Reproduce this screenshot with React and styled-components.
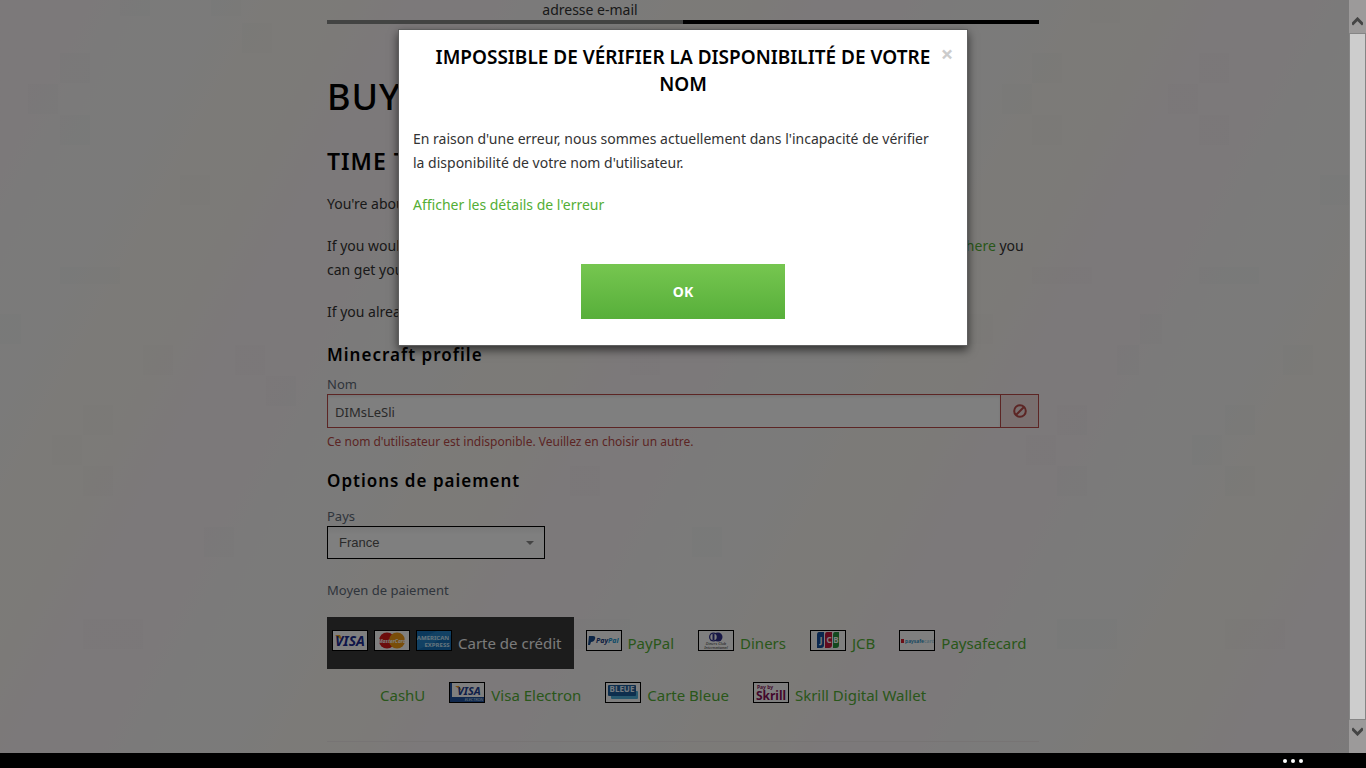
import React from "react";
import styled, { createGlobalStyle, css } from "styled-components";

const GlobalStyle = createGlobalStyle`
  * { box-sizing: border-box; }
  html, body, #root { height: 100%; }
  body {
    margin: 0;
    overflow: hidden;
    background: #000;
    color: #333;
    font-family: "Noto Sans", "Open Sans", sans-serif;
    font-size: 14px;
    line-height: 24px;
  }
`;

const tiles = [
  [28, 84], [60, 53], [60, 115], [180, 175], [120, -14], [211, -14], [242, 23],
  [60, 267, 60, 17], [-9, 314], [143, 345], [235, 345], [266, 376], [83, 405],
  [52, 435], [83, 466], [204, 527], [83, 619, 60], [1002, 84], [1032, 53],
  [1032, 115], [1199, 53], [1168, 84], [1199, 115], [1320, 175], [1090, -7],
  [570, 466], [692, 527], [570, 619, 60], [630, 345], [1032, 267, 60, 17],
  [1199, 267, 60, 17], [963, 314], [1140, 314, 22], [1117, 345, 22],
  [1283, 345], [1057, 405], [1225, 405], [1026, 435], [1192, 435],
  [1057, 466], [1225, 466], [1057, 619, 60], [1225, 619, 60],
];

const tile = "linear-gradient(rgba(120,145,155,0.025), rgba(120,145,155,0.025))";

const Screen = styled.div`
  display: flex;
  flex-direction: column;
  height: 100vh;
`;

const Viewport = styled.div`
  position: relative;
  flex: 1;
  min-height: 0;
  overflow: hidden;
  background-color: #f8f4f2;
  background-image: ${tiles.map(() => tile).join(",")},
    repeating-linear-gradient(118deg, rgba(250, 240, 246, 0.5) 0 60px, rgba(244, 247, 247, 0.5) 130px 190px, rgba(250, 247, 238, 0.5) 250px 300px, rgba(250, 240, 246, 0.5) 360px);
  background-repeat: no-repeat;
  background-position: ${tiles.map(([x, y]) => `${x}px ${y}px`).join(",")}, 0 0;
  background-size: ${tiles.map(([, , w = 30, h = 30]) => `${w}px ${h}px`).join(",")}, auto;
`;

const Page = styled.main`
  width: 100%;
  max-width: 712px;
  margin: 0 auto;
`;

const Steps = styled.ol`
  display: flex;
  list-style: none;
  margin: 0;
  padding: 0;
`;

const Step = styled.li`
  flex: 1;
  height: 24px;
  padding-left: 170px;
  line-height: 20px;
  font-size: 14px;
  text-align: center;
  border-bottom: 4px solid ${(p) => (p.$done ? "#868986" : "#000")};
`;

const Title = styled.h1`
  margin: 50px 0 0;
  color: #000;
  font-size: 36px;
  line-height: 46px;
  font-weight: 500;
  letter-spacing: 1px;
`;

const Subtitle = styled.h2`
  margin: 26px 0 16px;
  color: #000;
  font-size: 23px;
  line-height: 30px;
  font-weight: 600;
  letter-spacing: 1px;
`;

const Paragraph = styled.p`
  margin: 0 0 18px;
`;

const TextLink = styled.a`
  color: #53ae35;
  text-decoration: none;
`;

const SectionTitle = styled.h3`
  margin: 0;
  padding-top: 1px;
  color: #000;
  font-size: 17px;
  line-height: 24px;
  font-weight: 600;
  letter-spacing: 1px;
`;

const Label = styled.label`
  display: block;
  margin-top: ${(p) => p.$gap || 0}px;
  color: #5f6a78;
  font-size: 13px;
  line-height: 19px;
`;

const InputGroup = styled.div`
  display: flex;
  height: 34px;
  border: 1px solid #b94a48;
`;

const TextInput = styled.input`
  flex: 1;
  min-width: 0;
  padding: 2px 7px 0;
  border: 0;
  background: #fff;
  box-shadow: inset 0 2px 3px rgba(0, 0, 0, 0.08);
  color: #555;
  font-family: inherit;
  font-size: 13px;
`;

const AddOn = styled.span`
  display: flex;
  align-items: center;
  justify-content: center;
  width: 38px;
  border-left: 1px solid #b94a48;
  background: #f2dede;
  color: #b94a48;
`;

const ErrorText = styled.p`
  margin: 4px 0 16px;
  color: #b94a48;
  font-size: 12px;
  line-height: 20px;
`;

const SelectWrap = styled.div`
  position: relative;
  width: 218px;
  height: 33px;
`;

const Select = styled.select`
  width: 100%;
  height: 100%;
  padding: 0 11px;
  appearance: none;
  border: 1px solid #000;
  border-radius: 0;
  background: linear-gradient(#f2f2f2, #fff 8px);
  color: #555;
  font-family: "Liberation Sans", sans-serif;
  font-size: 13px;
`;

const Caret = styled.svg`
  position: absolute;
  right: 11px;
  top: 15px;
  pointer-events: none;
`;

const Methods = styled.ul`
  display: flex;
  height: 52px;
  margin: ${(p) => (p.$second ? "0 0 0 41px" : "17px 0 0")};
  padding: 0;
  list-style: none;
`;

const Method = styled.a`
  display: flex;
  align-items: center;
  gap: 6px;
  height: 52px;
  padding: 0 12px 0 ${(p) => (p.$active ? 5 : 12)}px;
  color: #53ae35;
  font-size: 15px;
  white-space: nowrap;
  text-decoration: none;
  ${(p) => p.$active && css`
    background: #383838;
    color: #f4f4f4;
  `}
`;

const CardArt = styled.svg`
  flex: none;
  margin-bottom: 5px;
  border: 1px solid #000;
  background: #fff;
`;

const Rule = styled.hr`
  height: 1px;
  margin: 20px 0 0;
  border: 0;
  background: #eee9e8;
`;

const Backdrop = styled.div`
  position: absolute;
  inset: 0;
  background: rgba(0, 0, 0, 0.5);
`;

const Dialog = styled.section`
  position: absolute;
  top: 30px;
  left: 50%;
  width: 568px;
  max-width: 100%;
  transform: translateX(-50%);
  padding: 14px 14px 26px;
  background: #fff;
  box-shadow: 0 0 0 1px #5f5f5f, 0 4px 9px 1px rgba(0, 0, 0, 0.6);
`;

const DialogTitle = styled.h2`
  margin: 0 14px 29px;
  color: #000;
  font-size: 19px;
  line-height: 27px;
  font-weight: 600;
  text-align: center;
`;

const DialogText = styled(Paragraph)`
  padding-right: 12px;
`;

const Close = styled.button`
  position: absolute;
  top: 13px;
  right: 10px;
  width: 20px;
  height: 20px;
  padding: 0;
  border: 0;
  background: none;
  color: #ccc;
  font: 700 22px/20px "Noto Sans", sans-serif;
`;

const OkButton = styled.button`
  display: block;
  width: 204px;
  height: 55px;
  margin: 47px auto 0;
  border: 0;
  background: linear-gradient(#76c650, #57af3a);
  color: #fff;
  font: 700 14px/24px "Noto Sans", sans-serif;
`;

const ScrollBar = styled.div`
  position: absolute;
  top: 0;
  right: 0;
  bottom: 0;
  display: flex;
  flex-direction: column;
  width: 17px;
  background: #9c9a9a;
`;

const Arrow = styled.div`
  display: flex;
  justify-content: center;
  align-items: ${(p) => (p.$up ? "flex-end" : "flex-start")};
  height: 33px;
  padding: 7px 0;
`;

const Thumb = styled.div`
  flex: 1;
  border: 1px solid #858585;
  background: #cdcdcd;
`;

const AppBar = styled.footer`
  display: flex;
  flex: none;
  justify-content: flex-end;
  align-items: center;
  gap: 4px;
  height: 15px;
  padding-right: 63px;
  background: #000;
`;

const Dot = styled.i`
  width: 4px;
  height: 4px;
  border-radius: 2px;
  background: #fff;
`;

const art = {
  visa: (
    <>
      <path d="M2 4h5l3 6z" fill="#f0a020" />
      <text x="17" y="15" fontSize="14" textAnchor="middle" fontWeight="700" fontStyle="italic" fill="#1a2a90">VISA</text>
    </>
  ),
  mastercard: (
    <>
      <circle cx="12" cy="9.5" r="8" fill="#d81818" />
      <circle cx="22" cy="9.5" r="8" fill="#f39a12" />
      <text x="17" y="12" fontSize="5" textAnchor="middle" fontWeight="700" fontStyle="italic" fill="#fff">MasterCard</text>
    </>
  ),
  amex: (
    <>
      <rect width="34" height="19" fill="#1671b8" />
      <path d="M0 19V9L20 0h14v4z" fill="#3396d8" opacity=".5" />
      <text x="16" y="9" fontSize="6" textAnchor="middle" fontWeight="700" fill="#cce8fa">AMERICAN</text>
      <text x="20" y="16" fontSize="6" textAnchor="middle" fontWeight="700" fill="#cce8fa">EXPRESS</text>
    </>
  ),
  paypal: (
    <>
      <path d="M2 5h4q3 0 2 3t-4 3l-1 3H1z" fill="#164a8c" />
      <text x="9" y="12" fontSize="7" fontWeight="700" fontStyle="italic" fill="#173b80">Pay<tspan fill="#2196d0">Pal</tspan></text>
    </>
  ),
  diners: (
    <>
      <circle cx="14.5" cy="6" r="4.5" fill="#30308c" />
      <circle cx="19" cy="6" r="4.5" fill="#30308c" />
      <circle cx="14.5" cy="6" r="3.2" fill="#fff" />
      <path d="M14.500 3v6" stroke="#30308c" strokeWidth="2" />
      <text x="17" y="14" fontSize="4" textAnchor="middle" fontStyle="italic" fill="#333">Diners Club</text>
      <text x="17" y="18" fontSize="4" textAnchor="middle" fontStyle="italic" fill="#333">International</text>
    </>
  ),
  jcb: (
    <>
      <path d="M8 1h5v13q0 3-3 3H6V4q0-3 2-3z" fill="#164f9c" />
      <path d="M16 1h5v13q0 3-3 3h-4V4q0-3 2-3z" fill="#c4163c" />
      <path d="M24 1h4v13q0 3-3 3h-3V4q0-3 2-3z" fill="#27903c" />
      <text x="10" y="12" fontSize="8" textAnchor="middle" fontWeight="700" fill="#fff">J</text>
      <text x="18" y="12" fontSize="8" textAnchor="middle" fontWeight="700" fill="#fff">C</text>
      <text x="25" y="12" fontSize="8" textAnchor="middle" fontWeight="700" fill="#fff">B</text>
    </>
  ),
  paysafe: (
    <>
      <path d="M1 8h3v4H1z" fill="#d61c2c" />
      <text x="5" y="12" fontSize="5" fontWeight="600" fill="#168ac0">paysafe<tspan fill="#9fd0e4">card</tspan></text>
    </>
  ),
  electron: (
    <>
      <path d="M0 0h2v14h32v5H0z" fill="#20509c" />
      <path d="M5 3h4l3 5z" fill="#f0a020" />
      <text x="19" y="12" fontSize="11" textAnchor="middle" fontWeight="700" fontStyle="italic" fill="#203c90">VISA</text>
      <text x="24" y="18" fontSize="4" textAnchor="middle" fontStyle="italic" fill="#dbe6f5">ELECTRON</text>
    </>
  ),
  bleue: (
    <>
      <rect x="5" y="8" width="27" height="8" rx="1" fill="#4eb0dc" />
      <rect x="2" y="2" width="28" height="11" rx="1" fill="#1c5e9c" />
      <text x="16" y="9" fontSize="8" textAnchor="middle" fontWeight="700" fill="#e8f4ff">BLEUE</text>
    </>
  ),
  skrill: (
    <>
      <text x="3" y="6" fontSize="5" fontWeight="700" fill="#861058">Pay by</text>
      <text x="17" y="17" fontSize="12" textAnchor="middle" fontWeight="700" fill="#861058">Skrill</text>
    </>
  ),
};

const firstRow = [
  { name: "Carte de crédit", cards: ["visa", "mastercard", "amex"], active: true },
  { name: "PayPal", cards: ["paypal"] },
  { name: "Diners", cards: ["diners"] },
  { name: "JCB", cards: ["jcb"] },
  { name: "Paysafecard", cards: ["paysafe"] },
];

const secondRow = [
  { name: "CashU", cards: [] },
  { name: "Visa Electron", cards: ["electron"] },
  { name: "Carte Bleue", cards: ["bleue"] },
  { name: "Skrill Digital Wallet", cards: ["skrill"] },
];

function MethodRow({ items, second }) {
  return (
    <Methods $second={second}>
      {items.map((m) => (
        <li key={m.name}>
          <Method href="#" $active={m.active} aria-current={m.active}>
            {m.cards.map((c) => (
              <CardArt key={c} width="36" height="21" viewBox="0 0 34 19" aria-hidden="true">
                {art[c]}
              </CardArt>
            ))}
            <span>{m.name}</span>
          </Method>
        </li>
      ))}
    </Methods>
  );
}

export default function App() {
  return (
    <Screen>
      <GlobalStyle />
      <Viewport>
        <Page>
          <Steps>
            <Step $done>adresse e-mail</Step>
            <Step />
          </Steps>
          <Title>BUY IT</Title>
          <Subtitle>TIME TO BUY</Subtitle>
          <Paragraph>You're about to buy Minecraft.</Paragraph>
          <Paragraph>
            If you would like to buy the game as a present for a friend or redeem a prepaid gift code instead, <TextLink href="#">here</TextLink> you
            can get your gift code.
          </Paragraph>
          <Paragraph>If you already have an account, sign in first.</Paragraph>
          <SectionTitle>Minecraft profile</SectionTitle>
          <Label htmlFor="profile-name" $gap={8}>Nom</Label>
          <InputGroup>
            <TextInput id="profile-name" defaultValue="DIMsLeSli" />
            <AddOn>
              <svg width="14" height="14" viewBox="0 0 14 14" fill="none" stroke="currentColor" strokeWidth="2" aria-hidden="true">
                <circle cx="7" cy="7" r="5.8" />
                <path d="M3 11L11 3" />
              </svg>
            </AddOn>
          </InputGroup>
          <ErrorText>Ce nom d'utilisateur est indisponible. Veuillez en choisir un autre.</ErrorText>
          <SectionTitle>Options de paiement</SectionTitle>
          <Label htmlFor="country" $gap={14}>Pays</Label>
          <SelectWrap>
            <Select id="country" defaultValue="France">
              <option>France</option>
            </Select>
            <Caret width="8" height="4" viewBox="0 0 8 4" aria-hidden="true">
              <path d="M0 0h8L4 4z" fill="#888" />
            </Caret>
          </SelectWrap>
          <Label as="div" $gap={22}>Moyen de paiement</Label>
          <MethodRow items={firstRow} />
          <MethodRow items={secondRow} second />
          <Rule />
        </Page>
        <Backdrop />
        <Dialog role="dialog" aria-modal="true" aria-labelledby="dialog-title">
          <Close aria-label="Fermer">×</Close>
          <DialogTitle id="dialog-title">IMPOSSIBLE DE VÉRIFIER LA DISPONIBILITÉ DE VOTRE NOM</DialogTitle>
          <DialogText>
            En raison d'une erreur, nous sommes actuellement dans l'incapacité de vérifier la disponibilité de votre nom d'utilisateur.
          </DialogText>
          <TextLink href="#">Afficher les détails de l'erreur</TextLink>
          <OkButton>OK</OkButton>
        </Dialog>
        <ScrollBar aria-hidden="true">
          <Arrow $up>
            <svg width="11" height="9" viewBox="0 0 11 9" fill="none" stroke="#444" strokeWidth="3">
              <path d="M0 7.500L5.500 2L11 7.500" />
            </svg>
          </Arrow>
          <Thumb />
          <Arrow>
            <svg width="11" height="9" viewBox="0 0 11 9" fill="none" stroke="#444" strokeWidth="3">
              <path d="M0 1.500L5.500 7L11 1.500" />
            </svg>
          </Arrow>
        </ScrollBar>
      </Viewport>
      <AppBar>
        <Dot />
        <Dot />
        <Dot />
      </AppBar>
    </Screen>
  );
}
